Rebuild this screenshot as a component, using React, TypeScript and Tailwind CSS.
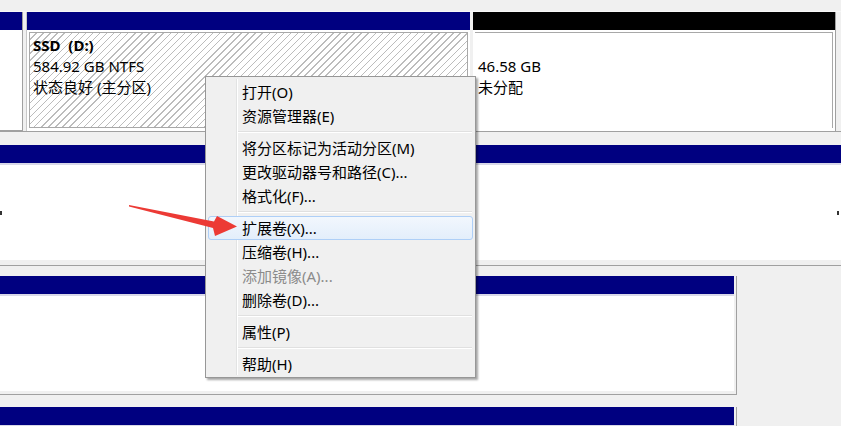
import React from 'react';

type Item = { label: string; disabled?: boolean; active?: boolean } | 'sep';

const MENU: Item[] = [
  { label: '打开(O)' },
  { label: '资源管理器(E)' },
  'sep',
  { label: '将分区标记为活动分区(M)' },
  { label: '更改驱动器号和路径(C)...' },
  { label: '格式化(F)...' },
  'sep',
  { label: '扩展卷(X)...', active: true },
  { label: '压缩卷(H)...' },
  { label: '添加镜像(A)...', disabled: true },
  { label: '删除卷(D)...' },
  'sep',
  { label: '属性(P)' },
  'sep',
  { label: '帮助(H)' },
];

const ContextMenu: React.FC = () => (
  <div className="absolute left-[205px] top-[76px] w-[271px] border border-[#979797] bg-[#f0f0f0] pt-[3px] pb-[1px] shadow-[2px_2px_2px_rgba(0,0,0,0.35)]">
    <div className="absolute left-[30px] top-[2px] bottom-[2px] w-[2px] border-l border-[#e2e3e3] border-r border-r-white" />
    {MENU.map((item, i) =>
      item === 'sep' ? (
        <div key={i} className="h-[8px] flex flex-col justify-center ml-[32px] mr-[3px]">
          <div className="h-px bg-[#e0e0e0]" />
          <div className="h-px bg-white" />
        </div>
      ) : (
        <div
          key={i}
          className={`relative mx-[2px] h-[24px] pl-[33px] rounded-[3px] border text-[15px] leading-[22px] whitespace-nowrap ${
            item.active
              ? 'border-[#aecff7] bg-[linear-gradient(#f2f7fd,#e3eefb)] text-black'
              : item.disabled
              ? 'border-transparent text-[#8b8b8b]'
              : 'border-transparent text-black'
          }`}
        >
          {item.label}
        </div>
      )
    )}
  </div>
);

const Arrow: React.FC = () => (
  <svg className="absolute left-0 top-0" width="841" height="426" viewBox="0 0 841 426">
    <polygon
      points="129,205 214,221.5 217,216 237,226.5 215,236 213,228 129,206.6"
      fill="#ec3a35"
    />
  </svg>
);

export default function App() {
  return (
    <div
      className="relative w-[841px] h-[426px] overflow-hidden bg-[#f0f0f0] text-black"
      style={{ fontFamily: '"Noto Sans", "Noto Sans CJK SC", sans-serif' }}
    >
      <div className="h-[12px] border-b border-[#f7f7f7]" />

      {/* row 1 */}
      <div className="flex h-[119px] gap-[3px]">
        <div className="w-[23px] flex flex-col border-r border-[#a0a0a0]">
          <div className="h-[18px] bg-[#000080]" />
          <div className="flex-1 bg-white border-b border-[#a0a0a0]" />
        </div>
        <div className="w-[444px] flex flex-col border-l border-[#c8c8c8]">
          <div className="h-[18px] bg-[#000080]" />
          <div className="flex-1 bg-white p-[2px] pb-[3px]">
            <div className="h-full border border-[#a8a8a8] bg-[repeating-linear-gradient(135deg,#ffffff_0px,#ffffff_4px,#bcbcbc_4px,#bcbcbc_5px)] px-[3px] pt-[2px] text-[15px] leading-[21px]">
              <div className="font-bold">SSD&nbsp;&nbsp;(D:)</div>
              <div>584.92 GB NTFS</div>
              <div>状态良好 (主分区)</div>
            </div>
          </div>
        </div>
        <div className="w-[363px] flex flex-col border-r border-[#a0a0a0]">
          <div className="h-[18px] bg-black" />
          <div className="flex-1 bg-white p-[2px] pb-[3px]">
            <div className="h-full border-t border-r border-[#a8a8a8] px-[3px] pt-[23px] text-[15px] leading-[21px]">
              <div>46.58 GB</div>
              <div>未分配</div>
            </div>
          </div>
        </div>
      </div>

      <div className="h-[14px] border-t border-[#a0a0a0]" />

      {/* row 2 */}
      <div className="flex flex-col h-[121px] border-b border-[#a0a0a0]">
        <div className="h-[18px] bg-[#000080]" />
        <div className="flex-1 bg-white border-t-2 border-[#d8d8e8] border-b-[5px] border-b-[#f0f0f0] flex items-center justify-between">
          <span className="w-[2px] h-[4px] bg-[#333]" />
          <span className="w-[2px] h-[4px] bg-[#333] mr-[2px]" />
        </div>
      </div>

      <div className="h-[10px]" />

      {/* row 3 */}
      <div className="flex">
        <div className="w-[737px] flex flex-col h-[119px] border-r border-b border-[#a0a0a0] pr-[2px] pb-[3px]">
          <div className="h-[18px] bg-[#000080]" />
          <div className="flex-1 bg-white border-t-2 border-[#d8d8e8]" />
        </div>
      </div>

      <div className="h-[12px]" />

      {/* row 4 */}
      <div className="flex">
        <div className="w-[737px] flex flex-col h-[40px] border-r border-[#a0a0a0] pr-[2px]">
          <div className="h-[18px] bg-[#000080]" />
          <div className="flex-1 bg-white border-t-2 border-[#d8d8e8]" />
        </div>
      </div>

      <ContextMenu />
      <Arrow />
    </div>
  );
}
